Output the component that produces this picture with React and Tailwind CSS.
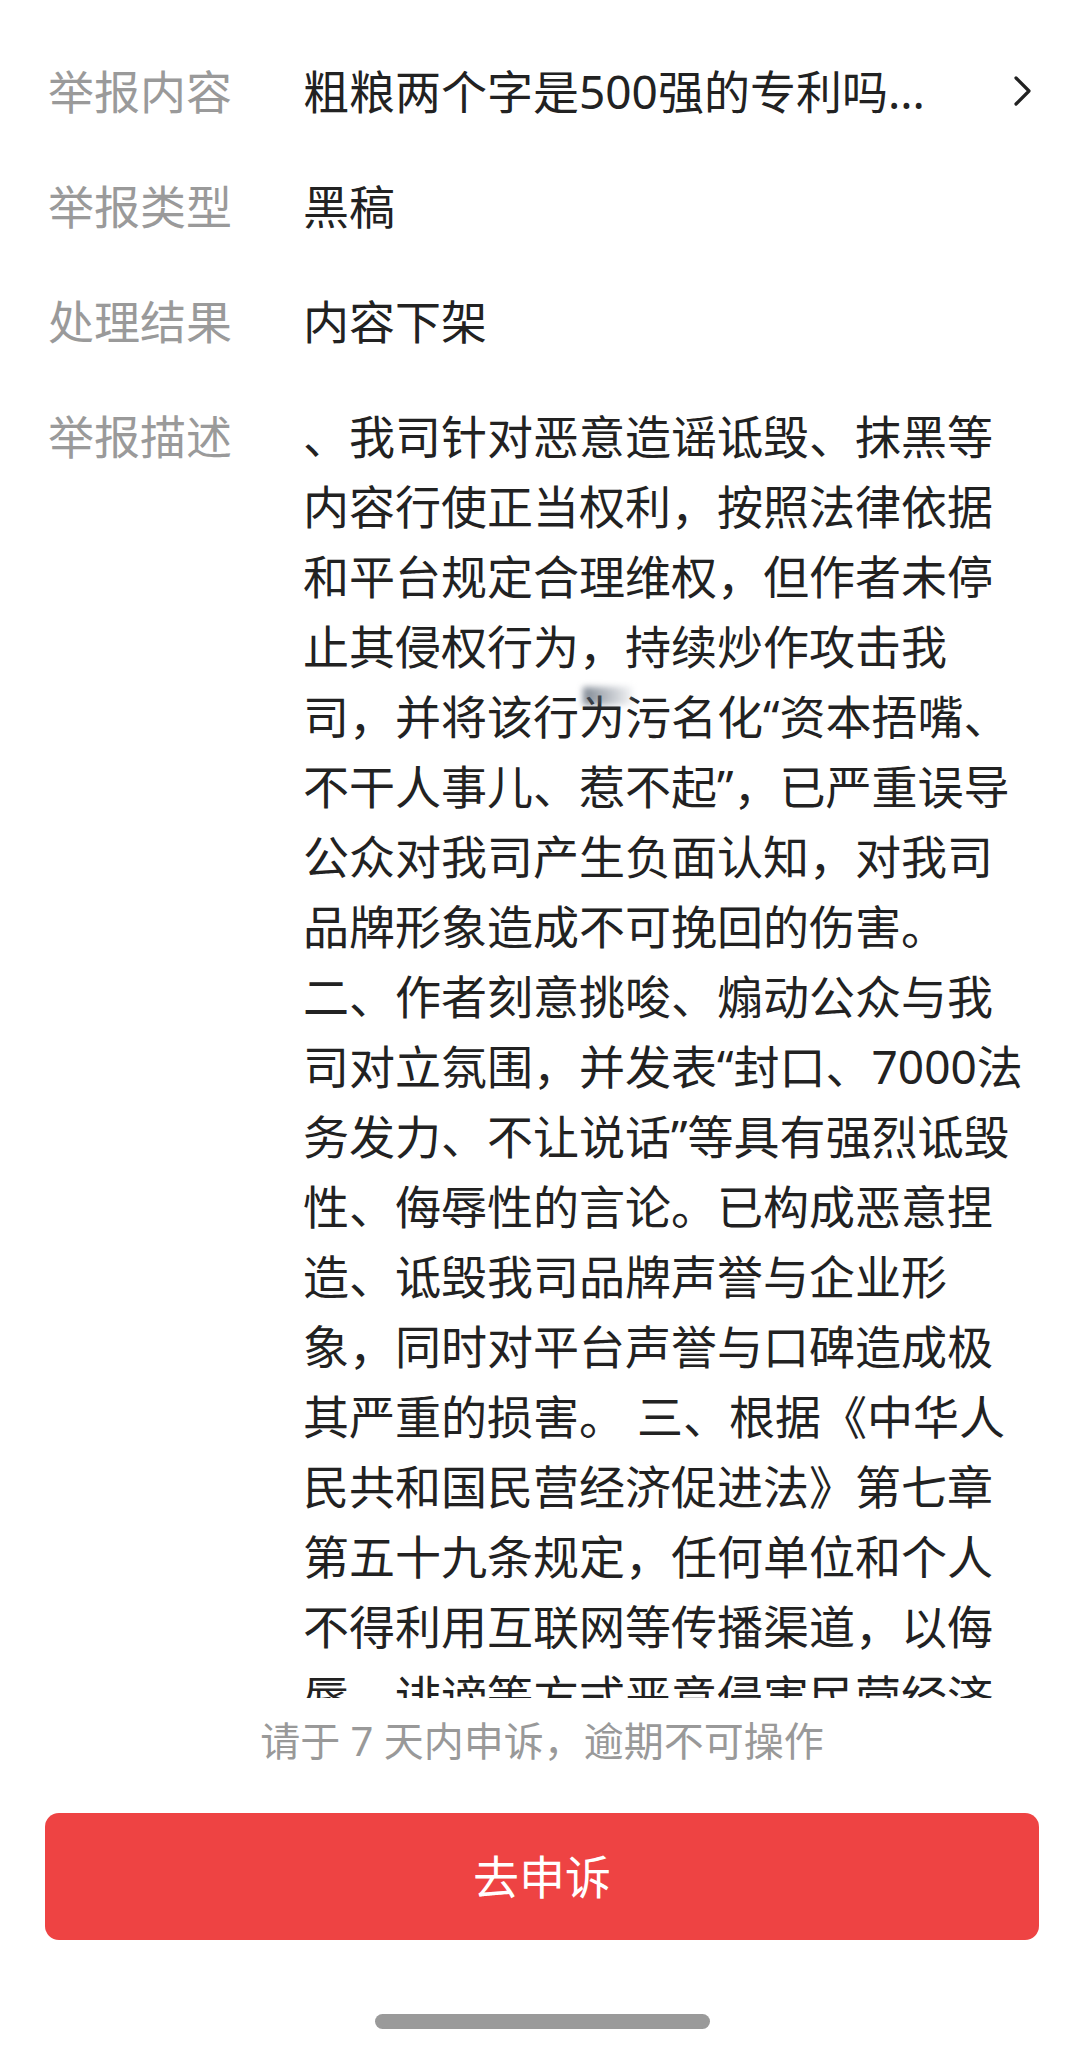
import React from "react";

const rows = [
  { label: "举报内容", value: "粗粮两个字是500强的专利吗...", link: true },
  { label: "举报类型", value: "黑稿" },
  { label: "处理结果", value: "内容下架" },
];

const descLines = [
  "、我司针对恶意造谣诋毁、抹黑等",
  "内容行使正当权利，按照法律依据",
  "和平台规定合理维权，但作者未停",
  "止其侵权行为，持续炒作攻击我",
  "司，并将该行为污名化“资本捂嘴、",
  "不干人事儿、惹不起”，已严重误导",
  "公众对我司产生负面认知，对我司",
  "品牌形象造成不可挽回的伤害。",
  "二、作者刻意挑唆、煽动公众与我",
  "司对立氛围，并发表“封口、7000法",
  "务发力、不让说话”等具有强烈诋毁",
  "性、侮辱性的言论。已构成恶意捏",
  "造、诋毁我司品牌声誉与企业形",
  "象，同时对平台声誉与口碑造成极",
  "其严重的损害。 三、根据《中华人",
  "民共和国民营经济促进法》第七章",
  "第五十九条规定，任何单位和个人",
  "不得利用互联网等传播渠道，以侮",
  "辱、诽谤等方式恶意侵害民营经济",
];

function Chevron() {
  return (
    <svg width="20" height="30" viewBox="0 0 20 30" fill="none">
      <polyline
        points="3,2 16,15 3,28"
        stroke="#222222"
        strokeWidth="3.2"
        strokeLinecap="round"
        strokeLinejoin="round"
      />
    </svg>
  );
}

export default function App() {
  return (
    <div className="w-[1084px] h-[2047px] bg-white flex flex-col font-['Noto_Sans','Noto_Sans_CJK_SC',sans-serif] text-[46px]">
      {/* detail list */}
      <div className="h-[1698px] overflow-hidden pt-[56px] pl-[48px] pr-[51px] flex flex-col gap-[45px]">
        {rows.map((r) => (
          <div key={r.label} className="flex items-center leading-[70px]">
            <div className="w-[255px] shrink-0 text-[#9a9a9a]">{r.label}</div>
            <div className="flex-1 text-[#222222] whitespace-nowrap">{r.value}</div>
            {r.link && <Chevron />}
          </div>
        ))}
        <div className="flex leading-[70px]">
          <div className="w-[255px] shrink-0 text-[#9a9a9a]">举报描述</div>
          <div className="relative flex-1 text-[#222222]">
            {descLines.map((line, i) => (
              <div key={i} className="whitespace-nowrap">
                {line}
              </div>
            ))}
            <div className="absolute left-[280px] top-[286px] w-[50px] h-[18px] bg-gradient-to-r from-gray-600/70 to-gray-300/20 blur-[3px]" />
          </div>
        </div>
      </div>

      <div className="h-[86px] flex items-center justify-center text-[40px] text-[#999999]">
        请于 7 天内申诉，逾期不可操作
      </div>

      <button className="mt-[29px] mx-[45px] h-[127px] rounded-[14px] bg-[#ee4343] text-white text-[46px] flex items-center justify-center">
        去申诉
      </button>

      <div className="mt-[74px] mx-auto w-[335px] h-[15px] rounded-full bg-[#9a9a9a]" />
    </div>
  );
}
